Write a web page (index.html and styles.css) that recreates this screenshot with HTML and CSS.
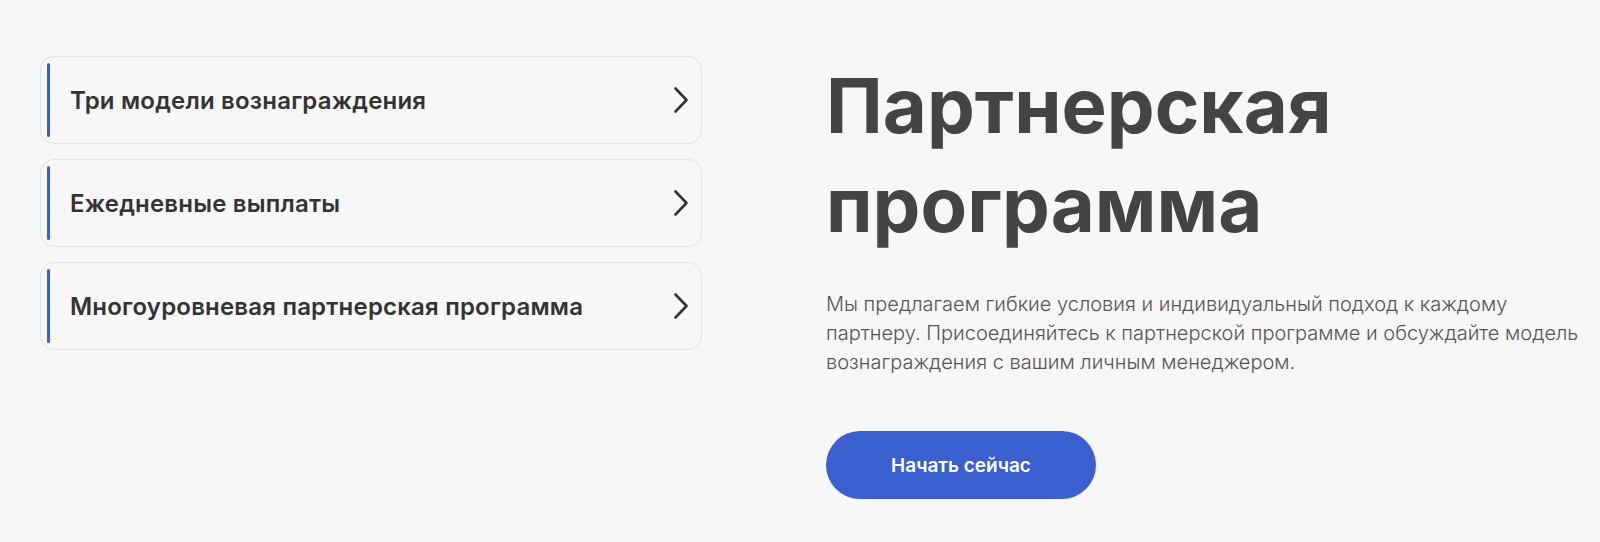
FILE: index.html
```html
<!DOCTYPE html>
<html lang="ru">
<head>
    <meta charset="UTF-8">
    <meta name="viewport" content="width=device-width, initial-scale=1.0">
    <title>Партнерская программа</title>
    <link rel="stylesheet" href="styles.css">
</head>
<body>
    <div class="page">
        <div class="features">
            <div class="feature">
                <span class="feature-bar"></span>
                <span class="feature-title">Три модели вознаграждения</span>
                <svg class="chevron" width="16" height="28" viewBox="0 0 16 28"><path d="M2.5 2.5 L13.5 14 L2.5 25.5" /></svg>
            </div>
            <div class="feature">
                <span class="feature-bar"></span>
                <span class="feature-title">Ежедневные выплаты</span>
                <svg class="chevron" width="16" height="28" viewBox="0 0 16 28"><path d="M2.5 2.5 L13.5 14 L2.5 25.5" /></svg>
            </div>
            <div class="feature">
                <span class="feature-bar"></span>
                <span class="feature-title">Многоуровневая партнерская программа</span>
                <svg class="chevron" width="16" height="28" viewBox="0 0 16 28"><path d="M2.5 2.5 L13.5 14 L2.5 25.5" /></svg>
            </div>
        </div>

        <div class="intro">
            <h1>Партнерская программа</h1>
            <p>Мы предлагаем гибкие условия и индивидуальный подход к каждому партнеру. Присоединяйтесь к партнерской программе и обсуждайте модель вознаграждения с вашим личным менеджером.</p>
            <a class="btn" href="#">Начать сейчас</a>
        </div>
    </div>
</body>
</html>
```

FILE: styles.css
```css
body {
    margin: 0;
    background: #f7f7f7;
    font-family: 'Inter', 'Noto Sans', sans-serif;
    color: #333;
    overflow: hidden;
}

.page {
    display: flex;
    align-items: flex-start;
    gap: 124px;
    padding: 56px 0 0 40px;
}

.features {
    width: 662px;
    flex-shrink: 0;
    display: flex;
    flex-direction: column;
    gap: 15px;
}

.feature {
    display: flex;
    align-items: center;
    height: 88px;
    box-sizing: border-box;
    padding: 6px 12px 6px 6px;
    border: 1px solid #e3e3e3;
    border-radius: 14px;
    cursor: pointer;
}

.feature-bar {
    align-self: stretch;
    width: 3px;
    border-radius: 2px;
    background: #3a5fcf;
}

.feature-title {
    flex: 1;
    margin-left: 20px;
    font-size: 24px;
    font-weight: 600;
    letter-spacing: 0.2px;
    color: #333;
}

.chevron path {
    fill: none;
    stroke: #333;
    stroke-width: 2.6;
    stroke-linecap: round;
    stroke-linejoin: round;
}

.intro {
    flex: 1;
    min-width: 0;
}

.intro h1 {
    margin: 0;
    font-size: 76px;
    line-height: 99px;
    font-weight: 700;
    color: #444;
}

.intro p {
    max-width: 772px;
    margin: 36px 0 0;
    font-size: 20px;
    line-height: 29px;
    font-weight: 300;
    color: #555;
}

.btn {
    display: inline-flex;
    align-items: center;
    justify-content: center;
    margin-top: 54px;
    width: 270px;
    height: 68px;
    border-radius: 34px;
    background: #3a5fcf;
    color: #fff;
    font-size: 19px;
    font-weight: 600;
    text-decoration: none;
}
```
